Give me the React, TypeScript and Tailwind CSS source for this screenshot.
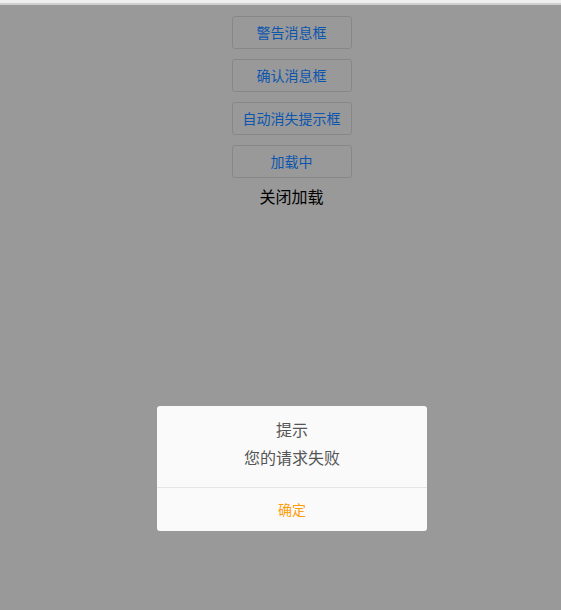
import React from 'react';

const buttons = ['警告消息框', '确认消息框', '自动消失提示框', '加载中'];

export default function App() {
  return (
    <div className="relative h-[610px] w-full overflow-hidden bg-[#999999] font-['Noto_Sans_CJK_SC',sans-serif]">
      <div className="h-[3px] bg-[#efefef]" />
      <div className="h-[2px] bg-[#d0d0d0]" />
      <div className="flex flex-col items-center pl-[22px] pt-[11px]">
        {buttons.map((b) => (
          <button
            key={b}
            className="mb-[10px] h-[33px] w-[120px] rounded-[3px] border border-[#878787] bg-[#999999] text-[14px] text-[#0b55ae]"
          >
            {b}
          </button>
        ))}
        <div className="-mt-[4px] text-[16px] leading-[24px] text-black">关闭加载</div>
      </div>

      {/* dialog */}
      <div className="absolute left-[157px] top-[406px] w-[270px] overflow-hidden rounded-[3px] bg-[#fafafa]">
        <div className="flex flex-col items-center pt-[11px] pb-[18px]">
          <div className="text-[16px] leading-[24px] text-[#555555]">提示</div>
          <div className="mt-[4px] text-[16px] leading-[24px] text-[#555555]">您的请求失败</div>
        </div>
        <div className="h-px bg-[#e5e5e5]" />
        <div className="flex h-[43px] items-center justify-center text-[14px] text-[#ff9d0a]">确定</div>
      </div>
    </div>
  );
}
